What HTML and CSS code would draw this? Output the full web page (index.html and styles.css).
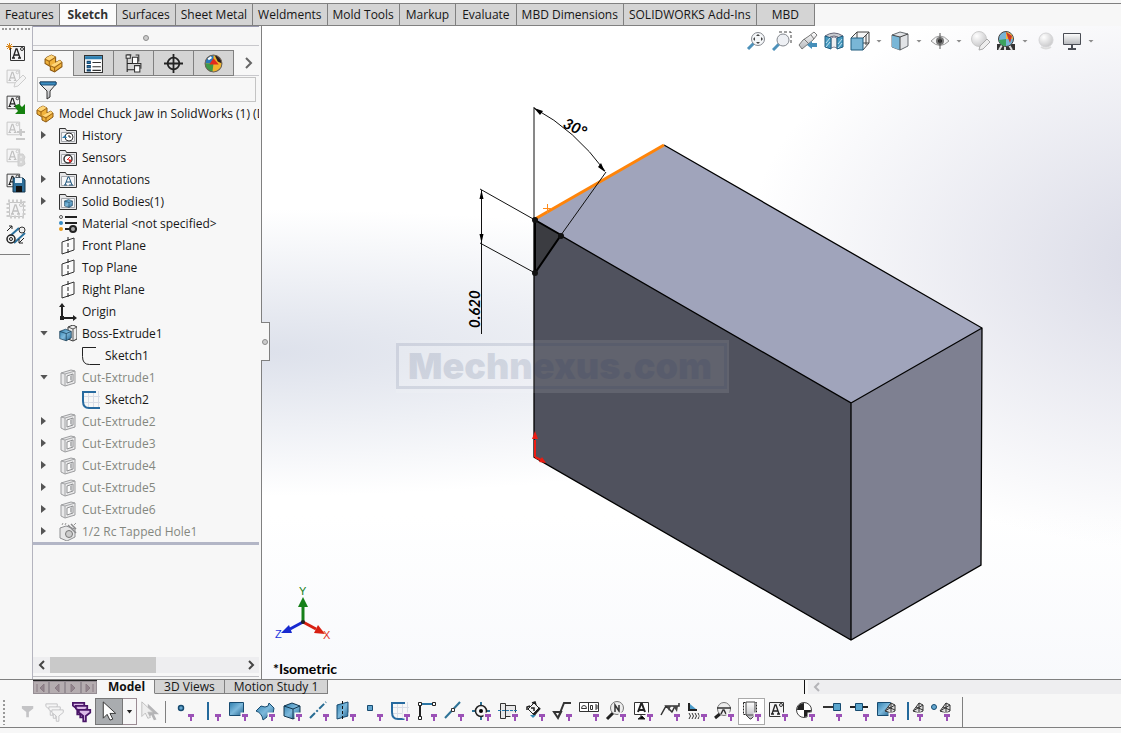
FILE: index.html
```html
<!DOCTYPE html>
<html lang="en">
<head>
<meta charset="utf-8">
<meta name="viewport" content="width=device-width, initial-scale=1">
<title>Model Chuck Jaw in SolidWorks (1)</title>
<link rel="stylesheet" href="styles.css">
</head>
<body>
<svg class="defs" aria-hidden="true">
  <defs>
    <linearGradient id="blue" x1="0" y1="0" x2="1" y2="1"><stop offset="0" stop-color="#2f7fae"/><stop offset=".5" stop-color="#7db9dc"/><stop offset="1" stop-color="#24648f"/></linearGradient>
    <linearGradient id="gold" x1="0" y1="0" x2="1" y2="1"><stop offset="0" stop-color="#ffd978"/><stop offset="1" stop-color="#e09a1c"/></linearGradient>
    <linearGradient id="steel" x1="0" y1="0" x2="0" y2="1"><stop offset="0" stop-color="#fff"/><stop offset="1" stop-color="#b5b7bb"/></linearGradient>
    <radialGradient id="pearl" cx=".35" cy=".3" r=".8"><stop offset="0" stop-color="#fff"/><stop offset="1" stop-color="#c4c4c6"/></radialGradient>
  </defs>
  <symbol id="badge" viewBox="0 0 24 24"><path d="M15 14h6v3h-2v4h-2v-4h-2z" fill="#9b51b6" stroke="#f7f7f7" stroke-width="3" paint-order="stroke"/></symbol>
  <symbol id="funnel" viewBox="0 0 20 20"><path d="M2 2h16v2l-6 7v6l-3 2v-8L2 4z" fill="url(#steel)" stroke="#333"/><path d="M2 2h16v3H3z" fill="#3b8dc0" stroke="#1c4f78"/></symbol>
  <symbol id="part" viewBox="0 0 18 18"><path d="M1 9V5l2-2 4-2 4 2v5l4-2 2 2v4l-7 5-4-2v-3z" fill="#f0b23c" stroke="#8a5710"/><path d="M1 5l2-2 4-2 4 2-6 3zM6 11l9-5 2 2-8 4z" fill="#ffd67a"/><path d="M1 5l4 2 6-4M5 7v4M6 11l4 2 7-5M10 13v4" fill="none" stroke="#9d6515"/></symbol>
  <symbol id="folder" viewBox="0 0 18 18"><path d="M.5 16.500v-15h6l1 2h10v13z" fill="#e6e6e8" stroke="#333"/><path d="M2.500 5.500h13v9h-13z" fill="#f5f6f8" stroke="#a5a8ad"/></symbol>
  <symbol id="plane" viewBox="0 0 18 18"><path d="M3 5l12-4v12L3 17z" fill="#fafafa" stroke="#333"/><path d="M9 0v18" stroke="#222" stroke-dasharray="4 2"/></symbol>
  <symbol id="cut" viewBox="0 0 18 18"><path d="M2 4l10-3 4 1v12l-10 3-4-2z" fill="#e9e9ea" stroke="#9c9d9f"/><path d="M2 4l4 1 10-3M6 5v12" fill="none" stroke="#a4a5a7"/><path d="M8 7l6-2v7l-6 2z" fill="#fafafa" stroke="#8f9092"/><path d="M11 7l2-1v6l-2-1z" fill="#b5b6b8"/></symbol>
  <symbol id="sketchicon" viewBox="0 0 18 18"><path d="M14 .5H.5v9q0 8 7 8H18" fill="none" stroke="#222"/></symbol>
  <symbol id="sketchblue" viewBox="0 0 18 18"><path d="M6.500 0v18M11.500 0v18M16.500 0v18M0 5.500h18M0 11.500h18" stroke="#d9dde6"/><path d="M14 1H1v9q0 7 6 7h11" fill="none" stroke="#276a9f" stroke-width="2"/></symbol>
  <symbol id="cube" viewBox="0 0 18 18"><path d="M1 4l8-3 8 3v9l-7 4-9-3z" fill="url(#blue)" stroke="#12364f"/><path d="M1 4l9 3 7-3M10 7v10" fill="none" stroke="#12364f"/></symbol>
  <symbol id="note" viewBox="0 0 20 20"><path d="M4.500 3.500h14v14h-14z" fill="#f3f3f4" stroke="#333"/><path d="M7 15l3-9h1l3 9M8 12h5M6 15h3M12 15h3" fill="none" stroke="#222" stroke-width="1.300"/><circle cx="16" cy="6" r="1.500" fill="none" stroke="#333"/></symbol>
  <symbol id="mesh" viewBox="0 0 12 12"><path d="M1 9l6-8 4 2v6l-4 2z" fill="#ddd" stroke="#333"/><path d="M7 1v10M4 5l7 3M1 9l10-6" stroke="#333"/></symbol>
  <symbol id="filt" viewBox="0 0 16 16"><path d="M1 1h13v3l-5 4v6H6V8L1 4z"/></symbol>
  <symbol id="cursor" viewBox="0 0 18 22"><path d="M3 1v17l4-4 3 6 3-1-3-6h6z"/></symbol>
</svg>

<header class="ribbon">
  <nav class="ribbon-tabs" aria-label="Command tabs">
    <button class="rtab">Features</button><button class="rtab active">Sketch</button><button class="rtab">Surfaces</button><button class="rtab">Sheet Metal</button><button class="rtab">Weldments</button><button class="rtab">Mold Tools</button><button class="rtab short">Markup</button><button class="rtab short">Evaluate</button><button class="rtab">MBD Dimensions</button><button class="rtab">SOLIDWORKS Add-Ins</button><button class="rtab wide">MBD</button>
  </nav>
</header>

<main class="work">
  <aside class="side-tools" aria-label="Block tools">
    <div class="grip-h"></div>
    <button class="tool" aria-label="Make block"><svg viewBox="0 0 20 20"><use href="#note"/><path d="M3.500 0v7M0 3.500h7M1 1l5 5M6 1L1 6" stroke="#d9861a"/></svg></button>
    <button class="tool dim" aria-label="Edit block" disabled><svg viewBox="0 0 20 20"><use href="#note" x="-3" y="-2" width="18" height="18"/><path d="M8 18l1-4 8-8 3 3-8 8z" fill="#eee" stroke="#555"/></svg></button>
    <button class="tool" aria-label="Insert block"><svg viewBox="0 0 20 20"><use href="#note" x="-3" y="-2" width="18" height="18"/><path d="M10 10l3-1 3 3 3-3v10H9l3-3-3-4z" fill="#15810f"/></svg></button>
    <button class="tool dim" aria-label="Add or remove" disabled><svg viewBox="0 0 20 20"><use href="#note" x="-3" y="-2" width="18" height="18"/><path d="M15 8v7M11 11h8M10 18h9" stroke="#444" stroke-width="2"/></svg></button>
    <button class="tool dim" aria-label="Rebuild block" disabled><svg viewBox="0 0 20 20"><use href="#note" x="-3" y="-1" width="18" height="18"/><path d="M12 7h5l2 3-1 3 1 4-3 2h-4z" fill="#777" stroke="#555"/><path d="M14 10h2M14 15h2" stroke="#fff"/></svg></button>
    <button class="tool" aria-label="Save block"><svg viewBox="0 0 20 20"><use href="#note" x="-3" y="-2" width="18" height="18"/><path d="M7 5h10l2 2v12H7z" fill="#2d6e99" stroke="#17364c"/><path d="M9 5h7v5H9z" fill="#e7f2fa"/><path d="M10 13h6v6h-6z" fill="#111"/></svg></button>
    <button class="tool dim" aria-label="Explode block" disabled><svg viewBox="0 0 20 20"><use href="#note" x="-1"/><path d="M2 2h16v16H2z" fill="none" stroke="#555" stroke-width="3" stroke-dasharray="2 2"/></svg></button>
    <button class="tool" aria-label="Belt or chain"><svg viewBox="0 0 20 20"><path d="M3 12L13 3M8 18L19 8" stroke="#2a719e" stroke-width="2"/><circle cx="5" cy="14" r="4" fill="#eee" stroke="#222" stroke-width="1.500"/><circle cx="5" cy="14" r="1.500" fill="none" stroke="#222"/><circle cx="16" cy="5" r="3" fill="#eee" stroke="#333"/><path d="M1 6l5-5M3 1h3v3M18 13l-5 5v-4M13 18h4" fill="none" stroke="#222"/></svg></button>
  </aside>

  <section class="manager" aria-label="Feature manager">
    <div class="panel-grip"><i class="dot"></i></div>
    <div class="mtabs">
      <button class="mtab active" aria-label="Feature tree"><svg viewBox="0 0 18 18"><use href="#part"/></svg></button>
      <button class="mtab" aria-label="Properties"><svg viewBox="0 0 18 18"><path d="M.5 1.500h17v16H.5z" fill="#fff" stroke="#333"/><path d="M1 2h16v3H1z" fill="#2f81b3"/><path d="M3 7h3v2H3zM3 11h3v2H3zM3 15h3v1H3z" fill="#2f81b3" stroke="#17466e"/><path d="M8 8h8M8 12h8M8 15.500h8" stroke="#333"/></svg></button>
      <button class="mtab" aria-label="Configurations"><svg viewBox="0 0 18 18"><path d="M3 17V1h4M3 9h6M3 15h8" fill="none" stroke="#222"/><path d="M2 1h4v3H2z" fill="#eee" stroke="#333"/><path d="M8 3h5v6H8zM10 11h5v6h-5z" fill="#fff" stroke="#333"/><path d="M11 1h3v6M13 9h3v5" fill="none" stroke="#333"/></svg></button>
      <button class="mtab" aria-label="Dimension expert"><svg viewBox="0 0 18 18"><circle cx="9" cy="9" r="5.500" fill="none" stroke="#222" stroke-width="1.700"/><path d="M9 0v18M0 9h18" stroke="#222" stroke-width="1.700"/></svg></button>
      <button class="mtab" aria-label="Display manager"><svg viewBox="0 0 18 18"><circle cx="9" cy="9" r="8" fill="#f0b52c"/><path d="M9 1a8 8 0 0 0-8 8l8 0z" fill="#2a78b9"/><path d="M1 9a8 8 0 0 0 7 8l1-8z" fill="#3c9a48"/><path d="M5 10l4-6 5 6z" fill="#e22b1d"/><path d="M10 1q6 1 7 8l-4-2z" fill="#2b2020"/><circle cx="9" cy="9" r="8" fill="none" stroke="#6a6058"/><path d="M4 5l3-2" stroke="#fff" stroke-width="2"/></svg></button>
      <button class="more" aria-label="More tabs"><svg viewBox="0 0 8 12"><path d="M1 1l5 5-5 5" fill="none" stroke="#666" stroke-width="2"/></svg></button>
    </div>
    <label class="filter"><svg viewBox="0 0 20 20"><use href="#funnel"/></svg><input type="text" aria-label="Filter tree"></label>
    <ul class="tree">
      <li class="root"><svg viewBox="0 0 18 18"><use href="#part"/></svg><span>Model Chuck Jaw in SolidWorks (1) (D</span></li>
      <li><i class="arr"></i><svg viewBox="0 0 18 18"><use href="#folder"/><circle cx="10" cy="10" r="4" fill="#fff" stroke="#333"/><path d="M10 8v2h2" fill="none" stroke="#222"/><path d="M3 11l3-3 2 3z" fill="#2878aa"/></svg><span>History</span></li>
      <li><i class="arr none"></i><svg viewBox="0 0 18 18"><use href="#folder"/><circle cx="9" cy="10" r="4" fill="#fff" stroke="#333" stroke-width="1.500"/><path d="M9 10l4 1-2 3z" fill="#e22"/><path d="M8 11l3-3" stroke="#d22"/></svg><span>Sensors</span></li>
      <li><i class="arr"></i><svg viewBox="0 0 18 18"><use href="#folder"/><path d="M5 14h3M10 14h4M6 14l3-8h1l3 8M7 11h5" fill="none" stroke="#20577e"/></svg><span>Annotations</span></li>
      <li><i class="arr"></i><svg viewBox="0 0 18 18"><use href="#folder"/><use href="#cube" x="5" y="6" width="9" height="9"/></svg><span>Solid Bodies(1)</span></li>
      <li><i class="arr none"></i><svg viewBox="0 0 18 18"><path d="M6 2h12M6 8h12M6 14h12" stroke="#222" stroke-width="2"/><circle cx="2" cy="2" r="1.500" fill="#fff" stroke="#555"/><circle cx="2" cy="8" r="2" fill="#358bc4"/><circle cx="2" cy="14" r="2" fill="#e79c21"/><circle cx="14" cy="14" r="3" fill="#aaa" stroke="#222" stroke-width="2"/></svg><span>Material &lt;not specified&gt;</span></li>
      <li><i class="arr none"></i><svg viewBox="0 0 18 18"><use href="#plane"/></svg><span>Front Plane</span></li>
      <li><i class="arr none"></i><svg viewBox="0 0 18 18"><use href="#plane"/></svg><span>Top Plane</span></li>
      <li><i class="arr none"></i><svg viewBox="0 0 18 18"><use href="#plane"/></svg><span>Right Plane</span></li>
      <li><i class="arr none"></i><svg viewBox="0 0 18 18"><path d="M3 3v12h12" fill="none" stroke="#222" stroke-width="2"/><path d="M3 0l3 4H0zM18 15l-4-3v6zM1 13h4v4H1z" fill="#222"/></svg><span>Origin</span></li>
      <li><i class="arr open"></i><svg viewBox="0 0 18 18"><path d="M9 2l5-2 4 2v12l-4 2-5-2z" fill="#eee" stroke="#333"/><path d="M14 4v12M9 2l5 2 4-2" fill="none" stroke="#555"/><use href="#cube" x="0" y="3" width="13" height="14"/></svg><span>Boss-Extrude1</span></li>
      <li class="child"><svg viewBox="0 0 18 18"><use href="#sketchicon"/></svg><span>Sketch1</span></li>
      <li class="muted"><i class="arr open"></i><svg viewBox="0 0 18 18"><use href="#cut"/></svg><span>Cut-Extrude1</span></li>
      <li class="child"><svg viewBox="0 0 18 18"><use href="#sketchblue"/></svg><span>Sketch2</span></li>
      <li class="muted"><i class="arr"></i><svg viewBox="0 0 18 18"><use href="#cut"/></svg><span>Cut-Extrude2</span></li>
      <li class="muted"><i class="arr"></i><svg viewBox="0 0 18 18"><use href="#cut"/></svg><span>Cut-Extrude3</span></li>
      <li class="muted"><i class="arr"></i><svg viewBox="0 0 18 18"><use href="#cut"/></svg><span>Cut-Extrude4</span></li>
      <li class="muted"><i class="arr"></i><svg viewBox="0 0 18 18"><use href="#cut"/></svg><span>Cut-Extrude5</span></li>
      <li class="muted"><i class="arr"></i><svg viewBox="0 0 18 18"><use href="#cut"/></svg><span>Cut-Extrude6</span></li>
      <li class="muted"><i class="arr"></i><svg viewBox="0 0 18 18"><path d="M1 5l6-2 9 3v8l-8 4-7-3z" fill="#e6e6e7" stroke="#8f9092"/><circle cx="10" cy="11" r="3.500" fill="#ccc" stroke="#777"/><path d="M9 2l8 8M12 1l5 5" stroke="#8a8a8c" stroke-width="1.500"/><path d="M3 2l1-2M6 2l1-2M15 2l2-2" stroke="#999"/></svg><span>1/2 Rc Tapped Hole1</span></li>
    </ul>
    <div class="rollback"></div>
    <div class="hscroll">
      <button class="sbtn" aria-label="Scroll left"><svg viewBox="0 0 8 10"><path d="M6 1L2 5l4 4" fill="none" stroke="#444" stroke-width="2"/></svg></button>
      <div class="strack"><div class="sthumb"></div></div>
      <button class="sbtn" aria-label="Scroll right"><svg viewBox="0 0 8 10"><path d="M2 1l4 4-4 4" fill="none" stroke="#444" stroke-width="2"/></svg></button>
    </div>
    <div class="panel-foot"></div>
  </section>

  <section class="view" aria-label="Graphics area">
    <svg class="scene" viewBox="262 26 859 653" role="img" aria-label="Isometric model">
      <path d="M534 220L664 145 982 328 851 403z" fill="#a0a4bb"/>
      <path d="M534 220L851 403V640L534 457z" fill="#50525e"/>
      <path d="M851 403L982 328 981 565 851 640z" fill="#7e8091"/>
      <path d="M664 145L982 328 981 565 851 640 534 457V220L851 403V640M851 403L982 328" fill="none" stroke="#000" stroke-width="1.300"/>
      <path d="M535 220L561 235 535 273z" fill="#3b3c41" stroke="#000" stroke-width="2"/>
      <path d="M535 219L664 145" stroke="#ff8409" stroke-width="3"/>
      <path d="M547.500 204v9M543 208.500h9" stroke="#ff8c1c"/>
      <path d="M534 220V107M561 235L606 172M480 189L535 220M480 243L535 273M481.500 190V334" fill="none" stroke="#111"/>
      <path d="M534 108Q575 130 605 171" fill="none" stroke="#111"/>
      <path d="M534 108l9 3-3 4zM605 172l-7-5 3-4zM481.500 190l2 9h-4zM481.500 243l2-9h-4z" fill="#000"/>
      <g fill="#111"><circle cx="535" cy="220" r="3"/><circle cx="561" cy="236" r="3"/><circle cx="535" cy="273" r="3"/></g>
      <text class="dim-text" transform="translate(562 127) rotate(26)">30°</text>
      <text class="dim-text" transform="translate(480 328) rotate(-90)">0.620</text>
      <path d="M535 457V440M535 457l6 3" stroke="#ed1c12" stroke-width="2"/><path d="M535 431l3 8h-6zM546 463l-7-1 3-5z" fill="#ed1c12"/>
      <rect x="396" y="340" width="333" height="53" fill="#fff" opacity=".1"/>
      <rect x="397.500" y="344.500" width="328" height="43" fill="none" stroke="#1f3260" stroke-width="3" opacity=".12"/>
      <text class="mark" x="408" y="379">Mechnexus.com</text>
      <g stroke-width="3">
        <path d="M303 622V606" stroke="#168019"/><path d="M303 597l5 10h-10z" fill="#168019"/>
        <path d="M303 622l13 7" stroke="#d81f12"/><path d="M325 634l-11-1 4-8z" fill="#d81f12"/>
        <path d="M303 622l-13 7" stroke="#1729d0"/><path d="M281 633l8-8 3 8z" fill="#1729d0"/>
        <circle cx="303" cy="622" r="2" fill="#222"/>
      </g>
      <text class="axis" x="299" y="595" fill="#168019">Y</text><text class="axis" x="323" y="639" fill="#e03328">X</text><text class="axis" x="275" y="638" fill="#1d35dd">Z</text>
      <text class="view-name" x="273" y="674">*Isometric</text>
    </svg>
    <button class="collapse" aria-label="Collapse panel"><i class="dot"></i></button>
    <div class="hud" role="toolbar" aria-label="View tools">
      <button aria-label="Zoom to fit"><svg viewBox="0 0 20 20"><path d="M9 11l-7 7" stroke="#4d91ba" stroke-width="3"/><circle cx="12" cy="8" r="6.500" fill="#f5f7f9" stroke="#85898f"/><path d="M12 3l2 2h-4zM12 13l2-2h-4zM7 8l2-2v4zM17 8l-2-2v4z" fill="#444"/></svg></button>
      <button aria-label="Zoom to area"><svg viewBox="0 0 20 20"><path d="M7 1h12v12" fill="none" stroke="#444" stroke-dasharray="3 2"/><path d="M7 13l-6 6" stroke="#4d91ba" stroke-width="3"/><circle cx="11" cy="9" r="6" fill="#eef0f4" stroke="#85898f"/></svg></button>
      <button aria-label="Previous view"><svg viewBox="0 0 20 20"><path d="M1 14l4-5 6-4 5-4 3 3-4 5-5 4-6 5z" fill="url(#steel)" stroke="#777"/><path d="M6 8l5 5M13 4l3 4" stroke="#777"/><path d="M9 14l5-4v2h5v4h-5v2z" fill="#468fba"/></svg></button>
      <button aria-label="Section view"><svg viewBox="0 0 20 20"><path d="M1 5q9-6 18 0l-5 3V6q-4-2-8 0v2z" fill="#c9ccd1" stroke="#667"/><path d="M7 7q3-2 6 0v10q-3-2-6 0z" fill="#eceef0" stroke="#889"/><path d="M1 5l6 2v11l-6-2zM19 5l-6 2v11l6-2z" fill="#469ac0" stroke="#205c7f"/><path d="M2 12l4-5M2 16l4-5M14 13l4-5M14 17l4-5" stroke="#c4e3f1"/></svg></button>
      <button aria-label="View orientation"><svg viewBox="0 0 20 20"><path d="M1 7l6-6h12v11l-6 7" fill="#f5f5f5" stroke="#444"/><path d="M7 1v6M13 7l6-6M13 12h6M16 4v10" stroke="#444"/><path d="M1 7h12v12H1z" fill="#79b6d6" stroke="#205c7f"/></svg></button><i class="caret"></i>
      <button aria-label="Display style"><svg viewBox="0 0 20 20"><path d="M2 4l8-3 8 2v12l-8 4-8-3z" fill="#e1e3e6" stroke="#666b70"/><path d="M2 4l8 2v13l-8-3z" fill="#79b6d6"/><path d="M2 4l8 2 8-3M10 6v13" fill="none" stroke="#444"/></svg></button><i class="caret"></i>
      <button aria-label="Hide or show items"><svg viewBox="0 0 20 20"><path d="M1 10q9-10 18 0-9 9-18 0z" fill="#f4f4f5" stroke="#999"/><circle cx="10" cy="10" r="4" fill="#777"/><circle cx="10" cy="10" r="2" fill="#222"/><path d="M10 2v16" stroke="#555"/></svg></button><i class="caret"></i>
      <button aria-label="Edit appearance"><svg viewBox="0 0 20 20"><circle cx="9" cy="8" r="7.500" fill="url(#pearl)" stroke="#ccc"/><path d="M9 19l1-4 7-7 3 3-7 7z" fill="#eee" stroke="#aaa"/></svg></button>
      <button aria-label="Apply scene"><svg viewBox="0 0 20 20"><path d="M1 13h18v6H1z" fill="#333"/><path d="M3 19l3-5M9 19v-5M16 19l-3-5" stroke="#ddd" stroke-width="2"/><circle cx="10" cy="8" r="7.500" fill="#78b4d5" stroke="#444"/><path d="M10 8V1q7 1 7 7z" fill="#f0b43a"/><path d="M10 1l6 4-2 7-2-5z" fill="#cc3427"/><path d="M3 9q1 6 7 6V8z" fill="#3ba25d"/></svg></button><i class="caret"></i>
      <button aria-label="Render"><svg viewBox="0 0 20 20"><circle cx="10" cy="9" r="7" fill="url(#pearl)" stroke="#d5d5d7"/><path d="M5 16q5 3 10 0" fill="none" stroke="#ddd" stroke-width="2"/></svg></button>
      <button aria-label="View settings"><svg viewBox="0 0 20 20"><path d="M1.500 2.500h17v11h-17z" fill="url(#steel)" stroke="#4a4d55"/><path d="M10 14v4M6 18h8" stroke="#4a4d55" stroke-width="2"/></svg></button><i class="caret"></i>
    </div>
  </section>
</main>

<div class="doc-bar">
  <div class="vcr" role="group" aria-label="Tab navigation">
    <button aria-label="First"><svg viewBox="0 0 12 12"><path d="M2 2v8M9 2L5 6l4 4z"/></svg></button><button aria-label="Previous"><svg viewBox="0 0 12 12"><path d="M8 2L4 6l4 4z"/></svg></button><button aria-label="Next"><svg viewBox="0 0 12 12"><path d="M4 2l4 4-4 4z"/></svg></button><button aria-label="Last"><svg viewBox="0 0 12 12"><path d="M10 2v8M3 2l4 4-4 4z"/></svg></button>
  </div>
  <button class="dtab active">Model</button><button class="dtab">3D Views</button><button class="dtab">Motion Study 1</button>
  <div class="doc-space"></div>
  <div class="doc-scroll"><button class="sbtn" aria-label="Scroll tabs"><svg viewBox="0 0 8 10"><path d="M6 1L2 5l4 4" fill="none" stroke="#b4b4b8" stroke-width="2"/></svg></button></div>
</div>

<footer class="filters" role="toolbar" aria-label="Selection filters">
  <div class="grip-v"></div>
  <button aria-label="Toggle filters" disabled><svg viewBox="0 0 24 24"><use href="#filt" x="5" y="5" width="14" height="14" fill="#c4c4c6"/></svg></button>
  <button aria-label="Clear filters" disabled><svg viewBox="0 0 24 24"><g fill="#f5f5f5" stroke="#c0c0c2"><use href="#filt" x="2" y="3" width="14" height="14"/><use href="#filt" x="5" y="6" width="14" height="14"/><use href="#filt" x="8" y="9" width="14" height="14"/></g></svg></button>
  <button aria-label="All filters"><svg viewBox="0 0 24 24"><g fill="#ddbce8" stroke="#4a1668" stroke-width="2"><use href="#filt" x="2" y="2" width="14" height="14"/><use href="#filt" x="5" y="5" width="14" height="14"/><use href="#filt" x="8" y="9" width="14" height="14"/></g></svg></button>
  <button class="pick" aria-label="Select"><svg viewBox="0 0 24 24"><use href="#cursor" x="3" y="1" width="18" height="21" fill="#fff" stroke="#333"/></svg></button><button class="pick-more" aria-label="Selection options"><i class="caret dark"></i></button>
  <button aria-label="Magnified select" disabled><svg viewBox="0 0 24 24"><use href="#cursor" x="6" y="3" width="16" height="19" fill="#b5b5b7"/><use href="#cursor" x="0" y="1" width="16" height="19" fill="#eee" stroke="#bbb"/></svg></button>
  <div class="sep"></div>
  <button aria-label="Vertices"><svg viewBox="0 0 24 24"><circle cx="8" cy="8" r="2.500" fill="#63a6cf" stroke="#174b70" stroke-width="1.500"/><use href="#badge"/></svg></button>
  <button aria-label="Edges"><svg viewBox="0 0 24 24"><path d="M8 2v18" stroke="#24699b" stroke-width="2"/><use href="#badge"/></svg></button>
  <button aria-label="Faces"><svg viewBox="0 0 24 24"><path d="M2.500 2.500h14v13h-14z" fill="url(#blue)" stroke="#174b70"/><use href="#badge"/></svg></button>
  <button aria-label="Surface bodies"><svg viewBox="0 0 24 24"><path d="M2 11l5-5 4 1q4 0 4-4l5 5-1 6q-5-2-6 3l-4 3q-1-7-7-9z" fill="url(#blue)" stroke="#174b70"/><use href="#badge"/></svg></button>
  <button aria-label="Solid bodies"><svg viewBox="0 0 24 24"><use href="#cube" x="2" y="2" width="18" height="18"/><use href="#badge"/></svg></button>
  <button aria-label="Axes"><svg viewBox="0 0 24 24"><path d="M2 18L18 2" stroke="#286c93" stroke-width="2" stroke-dasharray="7 2 2 2"/><use href="#badge"/></svg></button>
  <button aria-label="Planes"><svg viewBox="0 0 24 24"><path d="M2 5l11-3v14L2 19z" fill="url(#blue)" stroke="#174b70"/><path d="M7.500 1v20" stroke="#111" stroke-dasharray="3 2"/><use href="#badge"/></svg></button>
  <button aria-label="Sketch points"><svg viewBox="0 0 24 24"><path d="M5.500 5.500h5v5h-5z" fill="#63a6cf" stroke="#174b70"/><use href="#badge"/></svg></button>
  <button aria-label="Sketches"><svg viewBox="0 0 24 24"><use href="#sketchblue" x="2" y="2" width="18" height="18"/><use href="#badge"/></svg></button>
  <button aria-label="Sketch segments"><svg viewBox="0 0 24 24"><path d="M4 18V4" stroke="#222" stroke-width="2"/><path d="M4 4h14" stroke="#2a75a4" stroke-width="2"/><path d="M2.500 2.500h3v3h-3zM16.500 2.500h3v3h-3zM2.500 16.500h3v3h-3z" fill="#fff" stroke="#222"/><use href="#badge"/></svg></button>
  <button aria-label="Midpoints"><svg viewBox="0 0 24 24"><path d="M2 18L17 2" stroke="#2e7397" stroke-width="2"/><path d="M8.500 8.500h3v3h-3z" fill="#fff" stroke="#333"/><use href="#badge"/></svg></button>
  <button aria-label="Center marks"><svg viewBox="0 0 24 24"><path d="M11 2v18M2 11h18" stroke="#2e7397" stroke-width="2"/><circle cx="11" cy="11" r="5.500" fill="#f7f7f7" stroke="#222" stroke-width="1.500"/><circle cx="11" cy="11" r="2"/><use href="#badge"/></svg></button>
  <button aria-label="Centerlines"><svg viewBox="0 0 24 24"><path d="M3.500 3.500h5v15h-5zM8.500 5.500h10v11h-10z" fill="#e7e7e8" stroke="#333"/><path d="M1 10.500h20" stroke="#2678ac" stroke-dasharray="3 1"/><use href="#badge"/></svg></button>
  <button aria-label="Dimensions"><svg viewBox="0 0 24 24"><path d="M4 9l6-6 5 5-6 6z" fill="#f5f5f5" stroke="#222"/><path d="M3 10V7l3-1M8 3l3-1 1 3M7 8h3v3" fill="none" stroke="#222" stroke-width="1.500"/><path d="M9 16l7-8" stroke="#222" stroke-width="2"/><path d="M6 15l3 3 3-3z" fill="#3388b5"/><use href="#badge"/></svg></button>
  <button aria-label="Surface finish"><svg viewBox="0 0 24 24"><path d="M3 12h7l-3 6zM7 18l6-15h7" fill="none" stroke="#333" stroke-width="2"/><use href="#badge"/></svg></button>
  <button aria-label="Tolerances"><svg viewBox="0 0 24 24"><path d="M1.500 2.500h19v9h-19zM10.500 2.500v9" fill="#fff" stroke="#333"/><path d="M3.500 8.500q0-3 2.500-3t2.500 3zM12.500 5.500h2v4h-2zM17 5h2v4h-2M17 7h2" fill="none" stroke="#333"/><use href="#badge"/></svg></button>
  <button aria-label="Notes"><svg viewBox="0 0 24 24"><path d="M8 13l-6 6" stroke="#222" stroke-width="3"/><circle cx="12" cy="8" r="6.500" fill="#eee" stroke="#777"/><path d="M10 12V5l4 6V5" fill="none" stroke="#333" stroke-width="1.500"/><use href="#badge"/></svg></button>
  <button aria-label="Datum features"><svg viewBox="0 0 24 24"><path d="M2.500 2.500h14v12h-14z" fill="#fff" stroke="#333"/><path d="M6 12l3-8h1l3 8M7 10h5" fill="none" stroke="#222" stroke-width="2"/><path d="M9 15v2M6 19h7l-3-3z" stroke="#222"/><use href="#badge"/></svg></button>
  <button aria-label="Weld symbols"><svg viewBox="0 0 24 24"><path d="M2 15l5-9h13V3M7 6h9l-3 6z" fill="none" stroke="#333" stroke-width="1.500"/><path d="M8 6h4l-2 5zM14 6h5l-1 6z" fill="#444"/><use href="#badge"/></svg></button>
  <button aria-label="Weld beads"><svg viewBox="0 0 24 24"><path d="M3 3v7h8" fill="none" stroke="#222" stroke-width="2"/><path d="M4 4l6 5H4z" fill="#4b9bc9"/><path d="M3 13q3 3 0 6M6 13q3 3 0 6M9 13q3 3 0 6M12 13q3 3 0 6" fill="none" stroke="#333"/><use href="#badge"/></svg></button>
  <button aria-label="Datum targets"><svg viewBox="0 0 24 24"><path d="M8 13l-6 5" stroke="#222" stroke-width="3"/><circle cx="11" cy="9" r="6.500" fill="#eee" stroke="#777"/><path d="M4 8h14M8 14l2-4h1l2 4" fill="none" stroke="#333" stroke-width="1.500"/><use href="#badge"/></svg></button>
  <button class="checked" aria-label="Cosmetic threads"><svg viewBox="0 0 24 24"><path d="M3.500 2.500h13v12h-13z" fill="none" stroke="#222" stroke-dasharray="2 1"/><path d="M6 2h9v13l-4 4h-1l-4-4z" fill="url(#steel)" stroke="#444"/><path d="M6 15h9" stroke="#444"/><use href="#badge"/></svg></button>
  <button aria-label="Blocks"><svg viewBox="0 0 24 24"><use href="#note" x="-2" y="-1" width="20" height="20"/><use href="#badge"/></svg></button>
  <button aria-label="Center of mass"><svg viewBox="0 0 24 24"><circle cx="10" cy="10" r="7.500" fill="#fff" stroke="#444"/><path d="M10 10V17a7 7 0 0 0 7-7zM10 10V3a7 7 0 0 0-7 7z" fill="#222"/><use href="#badge"/></svg></button>
  <button aria-label="Connection points"><svg viewBox="0 0 24 24"><path d="M2 7h11" stroke="#333" stroke-width="2"/><path d="M12.500 3.500h7v7h-7z" fill="#5aa5cd" stroke="#174b70"/><use href="#badge"/></svg></button>
  <button aria-label="Routing points"><svg viewBox="0 0 24 24"><path d="M2 7h18" stroke="#222" stroke-width="2"/><path d="M7.500 3.500h7v7h-7z" fill="#5aa5cd" stroke="#174b70"/><use href="#badge"/></svg></button>
  <button aria-label="Mesh faces"><svg viewBox="0 0 24 24"><path d="M2.500 2.500h13v13h-13z" fill="url(#blue)" stroke="#174b70"/><use href="#mesh" x="9" y="2" width="12" height="12"/><use href="#badge"/></svg></button>
  <button aria-label="Mesh edges"><svg viewBox="0 0 24 24"><path d="M6 2v18" stroke="#24699b" stroke-width="2"/><use href="#mesh" x="10" y="2" width="12" height="12"/><use href="#badge"/></svg></button>
  <button aria-label="Mesh vertices"><svg viewBox="0 0 24 24"><circle cx="5" cy="7" r="2.500" fill="#63a6cf" stroke="#174b70"/><use href="#mesh" x="10" y="2" width="12" height="12"/><use href="#badge"/></svg></button>
  <div class="sep end"></div>
</footer>
</body>
</html>
```

FILE: styles.css
```css
* { box-sizing: border-box; }
body {
  margin: 0;
  height: 100vh;
  display: flex;
  flex-direction: column;
  overflow: hidden;
  background: #f7f7f7;
  color: #161616;
  font: 12px/16px "Open Sans", "Noto Sans", sans-serif;
}
button {
  font: inherit;
  color: inherit;
  margin: 0;
  padding: 0;
  border: 0;
  background: none;
  white-space: nowrap;
}
svg { display: block; flex: none; }
.defs { position: absolute; width: 0; height: 0; }

/* Command tabs */
.ribbon { padding-top: 3px; }
.ribbon-tabs { display: flex; border-top: 1px solid #808080; }
.rtab {
  height: 22px;
  padding: 0 5px;
  background: #d4d4d4;
  border-right: 1px solid #808080;
  border-bottom: 1px solid #808080;
}
.rtab.active { background: #fbfbfb; font-weight: 700; color: #333; padding: 0 8px; }
.rtab.short { padding: 0 6px; }
.rtab.wide { padding: 0 15px; }

/* Main area */
.work { flex: 1; display: flex; min-height: 0; }
.side-tools {
  width: 30px;
  flex: none;
  align-self: flex-start;
  display: flex;
  flex-direction: column;
  align-items: center;
  border-bottom: 1px solid #808080;
  padding: 2px 0 6px 2px;
}
.grip-h { width: 28px; height: 3px; margin-bottom: 9px; border-top: 2px dotted #999; }
.tool { width: 26px; height: 26px; display: grid; place-items: center; }
.tool svg { width: 20px; height: 20px; }
.dim { opacity: .25; }

.manager {
  width: 230px;
  flex: none;
  margin-left: 2px;
  display: flex;
  flex-direction: column;
  border-left: 1px solid #b4b4be;
  border-right: 1px solid #808080;
  padding-right: 2px;
}
.panel-grip {
  height: 20px;
  border-top: 1px solid #9a9ab0;
  border-bottom: 1px solid #c8c8cc;
  display: grid;
  place-items: center;
  margin-bottom: 4px;
  padding-top: 4px;
}
.dot { width: 6px; height: 6px; border-radius: 50%; border: 1px solid #8c8c8c; background: #ccc; }
.mtabs { display: flex; height: 26px; }
.mtab { width: 40px; display: grid; place-items: center; background: #d4d4d4; border: 1px solid #808080; border-left: 0; }
.mtab.active { width: 41px; background: #f7f7f7; border-bottom: 0; }
.mtab svg { width: 19px; height: 19px; }
.more { flex: 1; display: grid; place-items: center; border-bottom: 1px solid #c8c8cc; padding-left: 4px; }
.more svg { width: 8px; height: 12px; }
.filter { height: 25px; margin: 1px 3px 0 4px; display: flex; align-items: center; border: 1px solid #c4c4c4; }
.filter svg { width: 20px; height: 20px; }
.filter input { flex: 1; min-width: 0; border: 0; background: none; outline: 0; font: inherit; }
.tree { list-style: none; margin: 0; padding: 0; overflow: hidden; }
.tree li { height: 22px; display: flex; align-items: center; padding: 2px 0 0 7px; white-space: nowrap; }
.tree svg { width: 18px; height: 18px; margin-right: 5px; }
.tree .root { padding-left: 3px; }
.tree .child { padding-left: 49px; }
.muted { color: #84877f; }
.arr { width: 5px; height: 8px; flex: none; margin: 0 13px 2px 1px; background: #555; clip-path: polygon(0 0, 100% 50%, 0 100%); }
.arr.open { width: 8px; height: 5px; margin: 0 11px 2px 0; clip-path: polygon(0 0, 100% 0, 50% 100%); }
.arr.none { visibility: hidden; }
.rollback { height: 3px; background: #b3b6c6; }
.hscroll { margin-top: auto; height: 16px; display: flex; background: #eeeef0; }
.sbtn { width: 17px; display: grid; place-items: center; }
.sbtn svg { width: 8px; height: 10px; }
.strack { flex: 1; }
.sthumb { width: 55%; height: 100%; background: #c9c9c9; }
.panel-foot { height: 3px; margin-top: 3px; border-top: 1px solid #c0c0c4; }

/* Graphics area */
.view {
  flex: 1;
  min-width: 0;
  position: relative;
  background:
    radial-gradient(ellipse 50% 44% at 106% 36%, #d9dae6 0%, rgba(217, 218, 230, 0) 100%),
    radial-gradient(ellipse 80% 22% at 0% 50%, #dde1eb 0%, rgba(221, 225, 235, 0) 100%),
    linear-gradient(#fff 75%, #f8f9fc);
}
.scene { width: 100%; height: 100%; }
.dim-text { font: italic 700 15px Lato, sans-serif; }
.mark { font: 900 36px Inter, "DejaVu Sans", sans-serif; fill: #1f3260; opacity: .13; }
.axis { font: 11px "Liberation Sans", sans-serif; }
.view-name { font: 700 14px Lato, sans-serif; }
.collapse {
  position: absolute;
  left: -1px;
  top: 296px;
  width: 9px;
  height: 39px;
  background: #f7f7f7;
  border: 1px solid #808080;
  border-left: 0;
  display: grid;
  place-items: center;
}
.hud { position: absolute; top: 4px; right: 22px; display: flex; align-items: center; }
.hud button { width: 26px; height: 22px; display: grid; place-items: center; }
.hud svg { width: 20px; height: 20px; }
.caret { width: 12px; height: 3px; margin-right: 2px; flex: none; background: #8c8c8c; clip-path: polygon(25% 0, 75% 0, 50% 100%); }
.caret.dark { background: #222; height: 4px; margin: 0; }

/* Document tabs */
.doc-bar { display: flex; height: 15px; padding-left: 33px; border-top: 1px solid #808080; }
.vcr { display: flex; border-top: 1px solid #222; margin-right: 2px; }
.vcr button { width: 16px; background: #b5adb0; border: 1px solid #968e94; display: grid; place-items: center; }
.vcr svg { width: 12px; height: 12px; fill: #94868e; stroke: #8a7c84; }
.dtab { padding: 0 9px; line-height: 12px; background: #d4d4d4; border-right: 1px solid #808080; border-bottom: 1px solid #808080; }
.dtab.active { background: #f7f7f7; font-weight: 700; color: #111; border-bottom-color: #f7f7f7; }
.doc-space { flex: 1; }
.doc-scroll { width: 317px; display: flex; background: #eeeef0; border-left: 1px solid #111; box-shadow: inset 3px 0 #f7f7f7; padding-left: 3px; }

/* Selection filters */
.filters { display: flex; height: 34px; padding-top: 2px; align-items: center; border-bottom: 1px solid #808080; margin-bottom: 5px; }
.filters button { width: 27px; height: 27px; display: grid; place-items: center; flex: none; }
.filters svg { width: 24px; height: 24px; }
.grip-v { width: 10px; height: 26px; margin-right: 4px; flex: none; background: radial-gradient(circle, #999 1px, transparent 1px) 2px 0 / 4px 4px repeat-y; }
.filters .pick { width: 28px; background: #a9acaf; border: 1px solid #777; }
.filters .pick-more { width: 14px; border: 1px solid #9b8c94; border-left: 0; }
.sep { width: 1px; height: 22px; margin: 0 5px 0 1px; background: #808080; flex: none; }
.sep.end { height: 30px; margin: 0 0 0 8px; }
.filters .checked { background: #fff; border: 1px solid #aaa; }
```
